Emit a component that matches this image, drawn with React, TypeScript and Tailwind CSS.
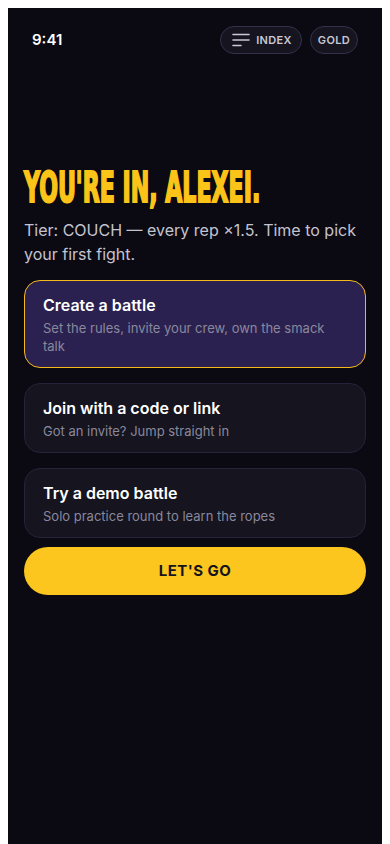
import React from 'react';

type Option = {
  title: string;
  desc: string;
  active?: boolean;
};

const options: Option[] = [
  { title: 'Create a battle', desc: 'Set the rules, invite your crew, own the smack talk', active: true },
  { title: 'Join with a code or link', desc: 'Got an invite? Jump straight in' },
  { title: 'Try a demo battle', desc: 'Solo practice round to learn the ropes' },
];

const App: React.FC = () => {
  return (
    <div className="min-h-screen bg-white pt-2 px-2 font-['Inter',sans-serif]">
      <div className="min-h-[836px] bg-[#0b0a12] px-4">
        {/* status bar */}
        <div className="flex items-center justify-between pt-[18px] pl-2 pr-2">
          <span className="text-[15px] font-semibold text-white">9:41</span>
          <div className="flex items-center gap-2">
            <button className="flex h-7 items-center gap-[6px] rounded-full border border-[#34324a] bg-[#15141f] pl-[11px] pr-[9px]">
              <svg width="18" height="14" viewBox="0 0 18 14" fill="none">
                <path d="M1 1.5h16M1 7h16M1 12.5h8" stroke="#c9c8d6" strokeWidth="1.6" strokeLinecap="round" />
              </svg>
              <span className="text-[11px] font-semibold tracking-[0.03em] text-[#c9c8d6]">INDEX</span>
            </button>
            <button className="flex h-7 items-center rounded-full border border-[#34324a] bg-[#15141f] px-[7px]">
              <span className="text-[11px] font-semibold tracking-[0.03em] text-[#c9c8d6]">GOLD</span>
            </button>
          </div>
        </div>

        <div className="pt-[110px]">
          <h1 className="origin-left scale-x-[0.585] whitespace-nowrap font-['Liberation_Sans_Narrow','DejaVu_Sans_Condensed',sans-serif] text-[42px] font-bold leading-[48px] text-[#fcc419] [-webkit-text-stroke:2px_#fcc419]">
            YOU'RE IN, ALEXEI.
          </h1>
          <p className="mt-[6px] text-[16px] leading-6 text-[#c4c3cf]">
            Tier: COUCH — every rep ×1.5. Time to pick your first fight.
          </p>
        </div>

        <div className="mt-[14px] flex flex-col gap-[15px]">
          {options.map((o) => (
            <div
              key={o.title}
              className={
                o.active
                  ? 'rounded-2xl border border-[#f5b91c] bg-[#2b2150] px-[18px] py-3'
                  : 'rounded-2xl border border-[#24233a] bg-[#15141f] px-[18px] py-3'
              }
            >
              <div className="text-[16px] font-semibold leading-6 text-white">{o.title}</div>
              <div className="mt-[2px] text-[13px] leading-[18px] text-[#8a889c]">{o.desc}</div>
            </div>
          ))}
        </div>

        <button className="mt-[9px] flex h-12 w-full items-center justify-center rounded-full bg-[#fcc61e]">
          <span className="text-[15px] font-bold tracking-[0.03em] text-[#16141c]">LET'S GO</span>
        </button>
      </div>
    </div>
  );
};

export default App;
